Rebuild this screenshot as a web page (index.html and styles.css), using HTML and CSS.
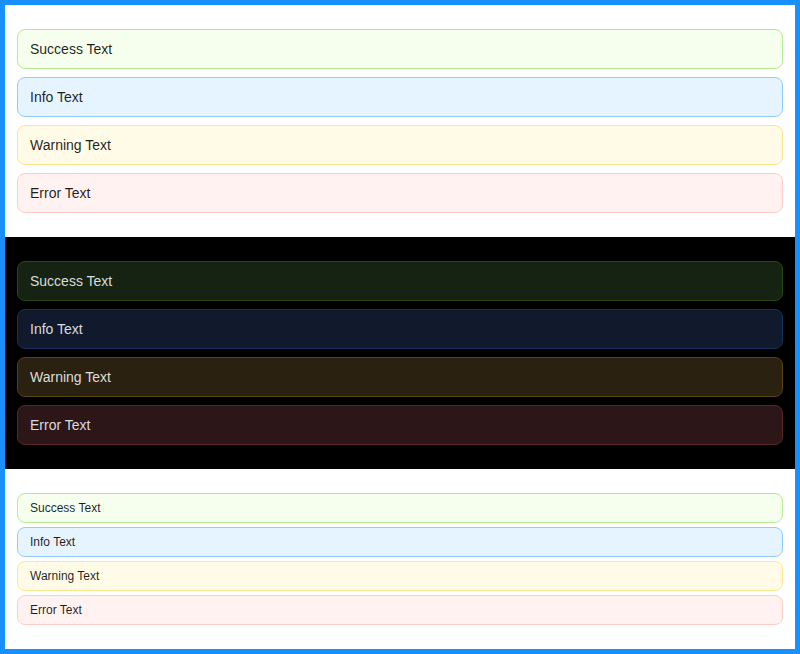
FILE: index.html
```html
<!DOCTYPE html>
<html>
<head>
<meta charset="utf-8">
<link rel="stylesheet" href="styles.css">
</head>
<body>
<div class="frame">
  <section class="panel light">
    <div class="alert success">Success Text</div>
    <div class="alert info">Info Text</div>
    <div class="alert warning">Warning Text</div>
    <div class="alert error">Error Text</div>
  </section>
  <section class="panel dark">
    <div class="alert success">Success Text</div>
    <div class="alert info">Info Text</div>
    <div class="alert warning">Warning Text</div>
    <div class="alert error">Error Text</div>
  </section>
  <section class="panel light compact">
    <div class="alert success">Success Text</div>
    <div class="alert info">Info Text</div>
    <div class="alert warning">Warning Text</div>
    <div class="alert error">Error Text</div>
  </section>
</div>
</body>
</html>
```
FILE: styles.css
```css
html, body {
  margin: 0;
  padding: 0;
}
body {
  font-family: "Liberation Sans", Arial, sans-serif;
  background: #fff;
}
.frame {
  box-sizing: border-box;
  width: 800px;
  height: 654px;
  border: 5px solid #1890ff;
  display: flex;
  flex-direction: column;
}
.panel {
  padding: 24px 12px;
  display: flex;
  flex-direction: column;
  gap: 8px;
}
.light { background: #fff; }
.dark { background: #000; }
.alert {
  box-sizing: border-box;
  border: 1px solid;
  border-radius: 8px;
  padding: 8px 12px;
  font-size: 14px;
  line-height: 22px;
  color: rgba(0,0,0,0.88);
}
.light .success { background: #f6ffed; border-color: #b7eb8f; }
.light .info { background: #e6f4ff; border-color: #91caff; }
.light .warning { background: #fffbe6; border-color: #ffe58f; }
.light .error { background: #fff2f0; border-color: #ffccc7; }
.dark .alert { color: rgba(255,255,255,0.85); }
.dark .success { background: #162312; border-color: #274916; }
.dark .info { background: #111a2c; border-color: #15325b; }
.dark .warning { background: #2b2111; border-color: #594214; }
.dark .error { background: #2c1618; border-color: #5b2526; }
.compact { gap: 4px; }
.compact .alert {
  padding: 4px 12px;
  font-size: 12px;
  line-height: 20px;
}
```
